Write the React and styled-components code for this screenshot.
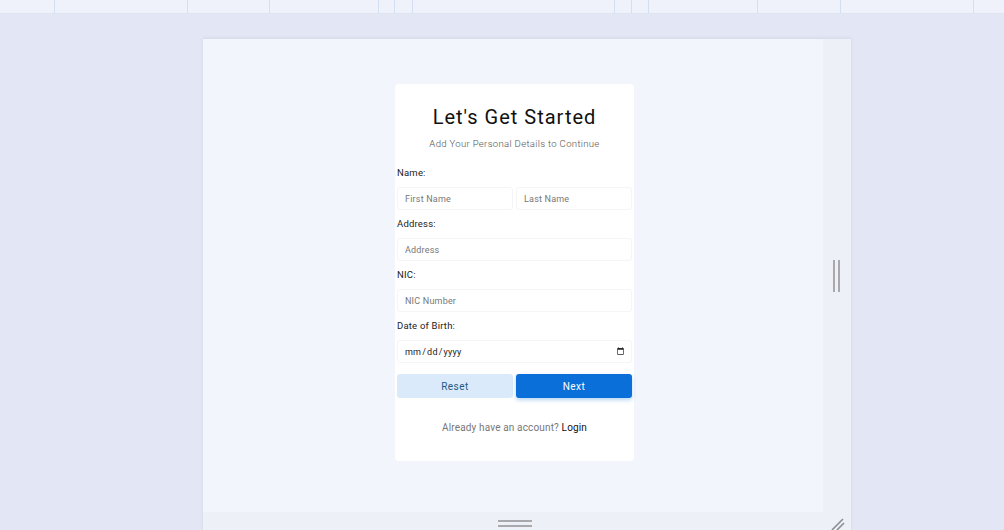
import React from 'react';
import styled, { createGlobalStyle } from 'styled-components';

const GlobalStyle = createGlobalStyle`
  html, body {
    margin: 0;
    padding: 0;
    height: 100%;
    background: #e3e7f5;
    font-family: Roboto, "Liberation Sans", sans-serif;
    overflow: hidden;
  }
  #root { height: 100%; }
  * { box-sizing: border-box; }
`;

const dividers = [55, 133, 82, 109, 16, 18, 202, 17, 17, 109, 83, 133];

const Page = styled.div`
  height: 530px;
  display: flex;
  flex-direction: column;
`;

const TopBar = styled.div`
  height: 14px;
  flex-shrink: 0;
  display: flex;
  background: #eff2fa;
  border-bottom: 1px solid #dfe4f0;
`;

const Cell = styled.div`
  width: ${p => p.w}px;
  flex-shrink: 0;
  border-right: 1px solid #d3e0f4;
`;

const Stage = styled.div`
  flex: 1;
  display: flex;
  justify-content: center;
  padding-top: 24px;
  padding-right: 153px;
  padding-left: 203px;
`;

const Frame = styled.div`
  width: 648px;
  display: grid;
  grid-template-columns: 620px 28px;
  grid-template-rows: 1fr 18px;
  background: #f3f5fc;
  border-top: 1px solid #d9deec;
  box-shadow: 0 0 3px rgba(150, 160, 190, 0.25);
`;

const Main = styled.div`
  display: flex;
  justify-content: center;
  padding-top: 45px;
  padding-left: 3px;
`;

const SideStrip = styled.div`
  background: #eef0f8;
  display: flex;
  justify-content: center;
  padding-top: 221px;
`;

const BottomStrip = styled.div`
  background: #eef0f8;
  display: flex;
  justify-content: center;
  padding-top: 8px;
  padding-left: 4px;
`;

const Corner = styled.div`
  background: #eef0f8;
  display: flex;
  align-items: flex-end;
  justify-content: flex-start;
  padding-left: 8px;
`;

const VHandle = styled.div`
  width: 7px;
  height: 32px;
  margin-left: -1px;
  border-left: 2px solid #a9a9ad;
  border-right: 2px solid #a9a9ad;
`;

const HHandle = styled.div`
  width: 34px;
  height: 7px;
  border-top: 2px solid #a9a9ad;
  border-bottom: 2px solid #a9a9ad;
`;

const Card = styled.div`
  width: 239px;
  height: 377px;
  background: #ffffff;
  border-radius: 4px;
  padding: 20px 2px 0;
  display: flex;
  flex-direction: column;
`;

const Title = styled.h1`
  margin: 0;
  text-align: center;
  font-size: 20px;
  font-weight: 400;
  letter-spacing: 1px;
  color: #111;
  line-height: 26px;
`;

const Subtitle = styled.p`
  margin: 8px 0 18px;
  text-align: center;
  font-size: 9.6px;
  font-weight: 300;
  letter-spacing: 0.3px;
  color: #555;
`;

const Label = styled.label`
  display: block;
  font-size: 9.5px;
  letter-spacing: 0.2px;
  color: #222;
  margin: 0 0 8px;
  line-height: 12px;
`;

const Row = styled.div`
  display: flex;
  gap: 3px;
  margin-bottom: 8px;
`;

const Input = styled.input`
  flex: 1;
  min-width: 0;
  width: ${p => (p.full ? '233px' : 'auto')};
  height: 23px;
  border: 1px solid #f5f5f7;
  border-radius: 3px;
  padding: 0 7px;
  font-family: Roboto, "Liberation Sans", sans-serif;
  font-size: 9px;
  letter-spacing: 0.2px;
  color: #333;
  background: #fff;
  outline: none;
  &::placeholder { color: #777; }
  &::-webkit-calendar-picker-indicator { opacity: 0.85; }
`;

const DateInput = styled(Input)`
  padding: 0 4px 0 6px;
  color: #222;
`;

const Buttons = styled.div`
  display: flex;
  gap: 3px;
  margin-top: 3px;
`;

const Button = styled.button`
  width: 116px;
  height: 24px;
  border: none;
  border-radius: 3px;
  font-family: Roboto, "Liberation Sans", sans-serif;
  font-size: 10px;
  letter-spacing: 0.5px;
  cursor: pointer;
  background: ${p => (p.primary ? '#0a6fd8' : '#dbeafb')};
  color: ${p => (p.primary ? '#ffffff' : '#1d5a86')};
  box-shadow: ${p => (p.primary ? '0 2px 4px rgba(10, 111, 216, 0.3)' : 'none')};
`;

const Footer = styled.p`
  margin: 24px 0 0;
  text-align: center;
  font-size: 10px;
  letter-spacing: 0.15px;
  color: #777;
  a {
    color: #111;
    font-weight: 400;
    text-decoration: none;
  }
`;

const App = () => {
  return (
    <>
      <GlobalStyle />
      <Page>
        <TopBar>
          {dividers.map((w, i) => (
            <Cell key={i} w={w} />
          ))}
        </TopBar>
        <Stage>
          <Frame>
            <Main>
              <Card>
                <Title>Let's Get Started</Title>
                <Subtitle>Add Your Personal Details to Continue</Subtitle>

                <Label>Name:</Label>
                <Row>
                  <Input placeholder="First Name" />
                  <Input placeholder="Last Name" />
                </Row>

                <Label>Address:</Label>
                <Row>
                  <Input full placeholder="Address" />
                </Row>

                <Label>NIC:</Label>
                <Row>
                  <Input full placeholder="NIC Number" />
                </Row>

                <Label>Date of Birth:</Label>
                <Row>
                  <DateInput full type="date" />
                </Row>

                <Buttons>
                  <Button>Reset</Button>
                  <Button primary>Next</Button>
                </Buttons>

                <Footer>
                  Already have an account? <a href="#">Login</a>
                </Footer>
              </Card>
            </Main>
            <SideStrip>
              <VHandle />
            </SideStrip>
            <BottomStrip>
              <HHandle />
            </BottomStrip>
            <Corner>
              <svg width="14" height="12" viewBox="0 0 14 12">
                <path d="M1 12 L12 1 M6 12 L13 5" stroke="#8e8e92" strokeWidth="1.6" fill="none" />
              </svg>
            </Corner>
          </Frame>
        </Stage>
      </Page>
    </>
  );
};

export default App;
